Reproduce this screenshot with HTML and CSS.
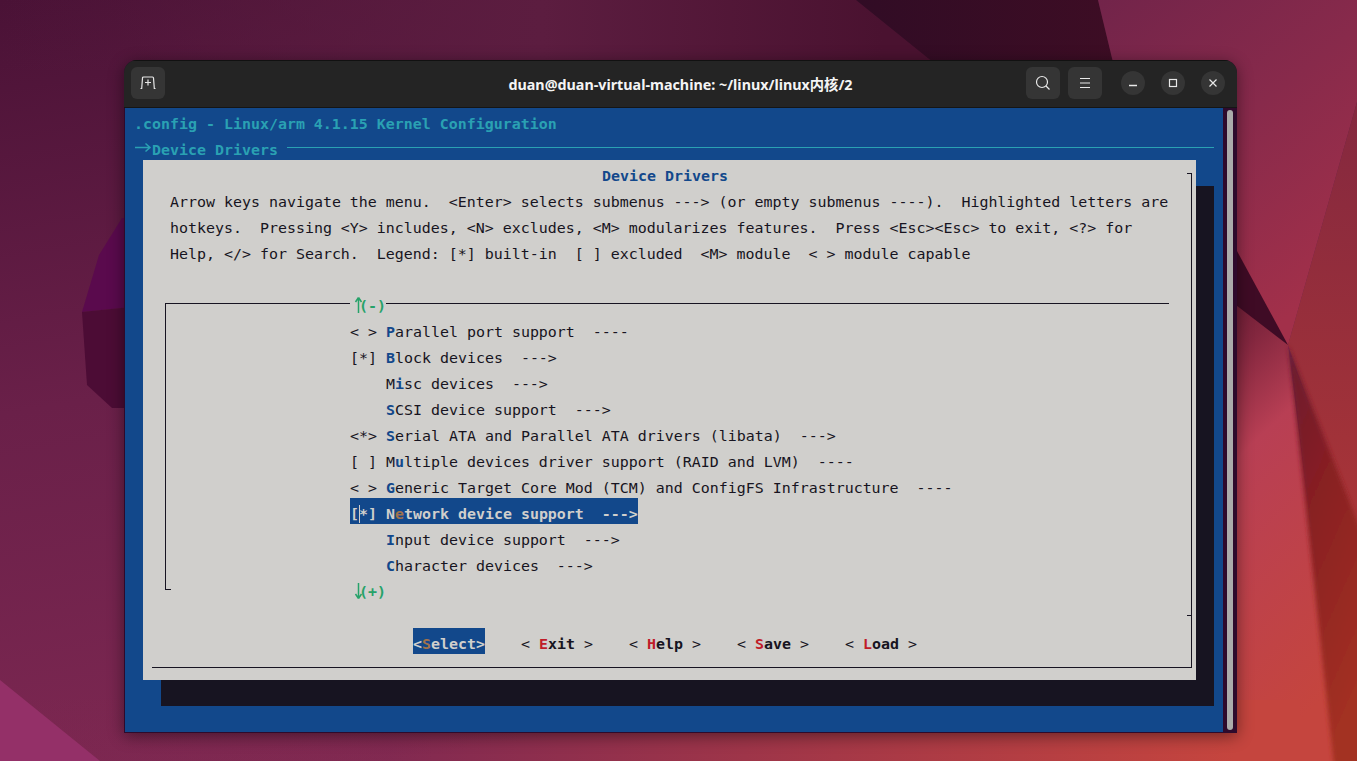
FILE: index.html
```html
<!DOCTYPE html>
<html lang="en">
<head>
  <meta charset="UTF-8" />
  <title>duan@duan-virtual-machine: ~/linux/linux内核/2</title>
  <link rel="stylesheet" href="styles.css">
</head>
<body>

  <!-- Wallpaper -->
  <svg class="wallpaper" width="1357" height="761" viewBox="0 0 1357 761">
    <defs>
      <linearGradient id="base" x1="0" y1="0" x2="0.3" y2="1">
        <stop offset="0" stop-color="#4a1236"/>
        <stop offset="0.5" stop-color="#6a2049"/>
        <stop offset="1" stop-color="#7e2852"/>
      </linearGradient>
      <linearGradient id="topBand" x1="0" y1="0" x2="1" y2="0">
        <stop offset="0" stop-color="#5c1d40" stop-opacity="0"/>
        <stop offset="0.09" stop-color="#5c1d40" stop-opacity="0.15"/>
        <stop offset="0.4" stop-color="#5c1d40" stop-opacity="1"/>
        <stop offset="0.65" stop-color="#4a1230" stop-opacity="1"/>
      </linearGradient>
      <linearGradient id="topWedge" x1="0" y1="0" x2="1" y2="0">
        <stop offset="0" stop-color="#310c25"/>
        <stop offset="1" stop-color="#400d24"/>
      </linearGradient>
      <linearGradient id="upperRight" x1="0" y1="0" x2="0.6" y2="1">
        <stop offset="0" stop-color="#72244a"/>
        <stop offset="0.5" stop-color="#882a4b"/>
        <stop offset="1" stop-color="#a2304a"/>
      </linearGradient>
      <linearGradient id="farRight" x1="0" y1="0" x2="0" y2="1">
        <stop offset="0" stop-color="#84283f"/>
        <stop offset="1" stop-color="#aa3537"/>
      </linearGradient>
      <linearGradient id="lowerRed" x1="0" y1="0" x2="0.2" y2="1">
        <stop offset="0" stop-color="#5e1830"/>
        <stop offset="0.18" stop-color="#84273f"/>
        <stop offset="0.38" stop-color="#b83f54"/>
        <stop offset="1" stop-color="#c5453e"/>
      </linearGradient>
      <linearGradient id="bottomBand" x1="0" y1="0" x2="1" y2="0">
        <stop offset="0" stop-color="#c5453e" stop-opacity="0"/>
        <stop offset="0.3" stop-color="#c5453e" stop-opacity="0.05"/>
        <stop offset="0.95" stop-color="#c5453e" stop-opacity="1"/>
      </linearGradient>
      <linearGradient id="darkRed" x1="0" y1="0" x2="0.4" y2="1">
        <stop offset="0" stop-color="#6a1b2e"/>
        <stop offset="0.4" stop-color="#861f24"/>
        <stop offset="1" stop-color="#a33022"/>
      </linearGradient>
      <filter id="soft" x="-20%" y="-5%" width="140%" height="110%">
        <feGaussianBlur stdDeviation="2"/>
      </filter>
    </defs>
    <rect width="1357" height="761" fill="url(#base)"/>
    <rect width="1357" height="70" fill="url(#topBand)"/>
    <polygon points="856,0 1098,0 1180,340 960,84" fill="url(#topWedge)"/>
    <polygon points="1098,0 1357,0 1357,102 1288,345 1180,340" fill="url(#upperRight)"/>
    <polygon points="1357,102 1357,541 1288,345" fill="url(#farRight)"/>
    <polygon points="1237,262 1288,345 1340,761 1237,761" fill="url(#lowerRed)"/>
    <rect x="0" y="700" width="1300" height="61" fill="url(#bottomBand)"/>
    <polygon points="1288,345 1365,541 1365,775 1335,775" fill="url(#darkRed)" filter="url(#soft)"/>
    <polygon points="1180,146 1288,345 1180,262" fill="#3f0b25"/>
    <polygon points="122,218 99,255 82,312 200,300 200,218" fill="#5a0a4d"/>
    <polygon points="82,312 87,385 112,408 200,408 200,300" fill="#4c0c35"/>
    <polygon points="0,680 100,761 0,761" fill="#943068"/>
  </svg>

  <div class="window">
    <!-- Title bar -->
    <header class="titlebar">
      <div class="bar-left">
        <button class="bar-btn">
          <svg width="16" height="14" viewBox="0 0 16 14"><path d="M.5 12.500h1.200L2.500 2a1 1 0 0 1 1-1h9a1 1 0 0 1 1 1l.8 10.500h1.200M8 3.500v6M5 6.500h6"/></svg>
        </button>
      </div>
      <div class="bar-title">duan@duan-virtual-machine: ~/linux/linux内核/2</div>
      <div class="bar-right">
        <button class="bar-btn">
          <svg width="16" height="16" viewBox="0 0 16 16"><circle cx="7" cy="7" r="5.500"/><path d="M11 11l3.500 3.500"/></svg>
        </button>
        <button class="bar-btn">
          <svg width="12" height="12" viewBox="0 0 12 12"><path d="M1 1.500h10M1 6h10M1 10.500h10"/></svg>
        </button>
        <div class="win-btns">
          <button class="win-btn">
            <svg width="10" height="10" viewBox="0 0 10 10"><path d="M1 7.500h8" stroke-width="1.500"/></svg>
          </button>
          <button class="win-btn">
            <svg width="10" height="10" viewBox="0 0 10 10"><rect x="1.500" y="1.500" width="7" height="7"/></svg>
          </button>
          <button class="win-btn">
            <svg width="10" height="10" viewBox="0 0 10 10"><path d="M1.500 1.500l7 7M8.500 1.500l-7 7"/></svg>
          </button>
        </div>
      </div>
    </header>

    <div class="term-wrap">
      <main class="terminal">
        <div class="row back-title">.config - Linux/arm 4.1.15 Kernel Configuration</div>
        <div class="row back-path">
          <svg class="path-arrow" width="18" height="26" viewBox="0 0 18 26"><path d="M1 13.500h15M11.500 9.500l4.500 4-4.500 4"/></svg>
          <span>Device Drivers</span>
          <span class="path-line"></span>
        </div>

        <!-- menuconfig dialog -->
        <section class="dialog">
          <div class="frame">
            <span class="tick tick-top"></span>
            <span class="tick tick-sep"></span>
            <div class="row dlg-title">Device Drivers</div>
            <div class="row help">Arrow keys navigate the menu.  &lt;Enter&gt; selects submenus ---&gt; (or empty submenus ----).  Highlighted letters are</div>
            <div class="row help">hotkeys.  Pressing &lt;Y&gt; includes, &lt;N&gt; excludes, &lt;M&gt; modularizes features.  Press &lt;Esc&gt;&lt;Esc&gt; to exit, &lt;?&gt; for</div>
            <div class="row help">Help, &lt;/&gt; for Search.  Legend: [*] built-in  [ ] excluded  &lt;M&gt; module  &lt; &gt; module capable</div>

            <div class="menu">
              <div class="row item scroll-top"><span class="scroll-mark"><svg class="scroll-arrow" width="14" height="26" viewBox="0 0 14 26"><path d="M8.500 23V7.500M8.500 7.500L5.500 12M8.500 7.500l3 4.500"/></svg>(-)</span></div>
              <div class="row item">&lt; &gt; <b>P</b>arallel port support  ----</div>
              <div class="row item">[*] <b>B</b>lock devices  ---&gt;</div>
              <div class="row item">    M<b>i</b>sc devices  ---&gt;</div>
              <div class="row item">    <b>S</b>CSI device support  ---&gt;</div>
              <div class="row item">&lt;*&gt; <b>S</b>erial ATA and Parallel ATA drivers (libata)  ---&gt;</div>
              <div class="row item">[ ] M<b>u</b>ltiple devices driver support (RAID and LVM)  ----</div>
              <div class="row item">&lt; &gt; <b>G</b>eneric Target Core Mod (TCM) and ConfigFS Infrastructure  ----</div>
              <div class="row item"><span class="item-on">[<span class="cursor">*</span>] N<b>e</b>twork device support  ---&gt;</span></div>
              <div class="row item">    <b>I</b>nput device support  ---&gt;</div>
              <div class="row item">    <b>C</b>haracter devices  ---&gt;</div>
              <div class="row item"><span class="scroll-mark"><svg class="scroll-arrow" width="14" height="26" viewBox="0 0 14 26"><path d="M8.500 7v15.500M8.500 22.500L5.500 18M8.500 22.500l3-4.500"/></svg>(+)</span></div>
            </div>

            <div class="row buttons">
              <span class="btn-on">&lt;<i>S</i>elect&gt;</span>
              <span>&lt; <b class="btn-text"><i>E</i>xit</b> &gt;</span>
              <span>&lt; <b class="btn-text"><i>H</i>elp</b> &gt;</span>
              <span>&lt; <b class="btn-text"><i>S</i>ave</b> &gt;</span>
              <span>&lt; <b class="btn-text"><i>L</i>oad</b> &gt;</span>
            </div>
          </div>
        </section>
      </main>
      <div class="scroll-gutter"><div class="scroll-thumb"></div></div>
    </div>
  </div>

</body>
</html>
```

FILE: styles.css
```css
/* Reset */
*, *::before, *::after { margin:0; padding:0; box-sizing:border-box; }
body { width:1357px; height:761px; overflow:hidden; position:relative; background:#4a1236; }

.wallpaper { position:absolute; left:0; top:0; display:block; }

/* Window */
.window {
  position:absolute; left:124px; top:60px; width:1113px; height:673px;
  display:flex; flex-direction:column; background:#2e0a2c;
  border-radius:13px 13px 0 0; overflow:hidden;
  box-shadow:0 3px 16px rgba(0,0,0,0.45);
}

/* Title bar */
.titlebar {
  height:48px; flex:none; background:#242424; border-bottom:1px solid #151515;
  box-shadow:inset 0 1px 0 #111;
  display:grid; grid-template-columns:1fr auto 1fr; align-items:center;
  padding:0 12px 1px 12px;
}
.bar-left { display:flex; margin-left:-5px; }
.bar-right { display:flex; justify-content:flex-end; align-items:center; gap:8px; }
.bar-title {
  font-family:"Noto Sans", "Noto Sans CJK SC", sans-serif; font-weight:700; font-size:14.3px;
  color:#f4f4f4; white-space:nowrap;
}
.bar-btn {
  width:34px; height:32px; border:none; border-radius:6px; background:#353535;
  display:flex; align-items:center; justify-content:center;
}
.titlebar svg { fill:none; stroke:#e8e8e8; stroke-width:1.2; }
.win-btns { display:flex; gap:16px; margin-left:11px; }
.win-btn {
  width:24px; height:24px; border:none; border-radius:50%; background:#353535;
  display:flex; align-items:center; justify-content:center;
}

/* Terminal */
.term-wrap { flex:1; display:flex; padding:0 1px 1px 1px; min-height:0; }
.terminal {
  flex:1; background:#12488b; color:#171421;
  font-family:"DejaVu Sans Mono", monospace; font-size:14.95px;
}
.row { height:26px; line-height:32px; white-space:pre; }
.back-title, .back-path { padding-left:9px; color:#2aa1b3; font-weight:700; }
.back-path { display:flex; padding-right:9px; }
.back-path svg { flex:none; fill:none; stroke:#2aa1b3; stroke-width:1.5; }
.path-line { flex:1; height:1px; background:#2aa1b3; margin:13px 0 0 9px; }

.scroll-gutter { width:13px; flex:none; padding:2px 3px 2px 4px; }
.scroll-thumb { width:6px; height:100%; border-radius:3px; background:#ababab; }

/* Dialog */
.dialog {
  width:1053px; height:520px; margin-left:18px; padding:13px 4px 0 9px;
  background:#d0cfcc; box-shadow:18px 26px 0 #171421;
}
.frame {
  display:flow-root; height:495px; position:relative;
  border-right:1px solid #171421; border-bottom:1px solid #171421;
}
.tick { position:absolute; right:0; width:4px; height:1px; background:#171421; }
.tick-top { top:0; }
.tick-sep { top:442px; }
.dlg-title { margin-top:-13px; padding-left:450px; color:#12488b; font-weight:700; }
.help { padding-left:18px; }

/* Menu list */
.menu {
  position:relative; width:1004px; height:287px; margin:39px 0 38px 13px;
  border-top:1px solid #171421; border-left:1px solid #171421;
}
.menu::after { content:""; position:absolute; left:0; bottom:0; width:5px; height:1px; background:#171421; }
.item { padding-left:184px; }
.scroll-top { margin-top:-14px; }
.item b { color:#12488b; font-weight:700; }
.item-on { display:inline-block; width:288px; height:26px; background:#12488b; color:#d0cfcc; font-weight:700; vertical-align:top; }
.item-on b { color:#a2734c; }
.cursor { box-shadow:inset 1px 0 0 #d0cfcc; }
.scroll-mark {
  display:inline-block; width:36px; height:26px; padding-left:9px; position:relative;
  background:#d0cfcc; color:#26a269; font-weight:700; vertical-align:top;
}
.scroll-arrow { position:absolute; left:0; top:0; overflow:visible; fill:none; stroke:#26a269; stroke-width:1.5; }

/* Buttons */
.buttons { display:flex; gap:36px; padding-left:261px; }
.buttons i { font-style:normal; color:#c01c28; }
.btn-on { background:#12488b; color:#d0cfcc; font-weight:700; }
.btn-on i { color:#a2734c; }
.btn-text { font-weight:700; }
```
